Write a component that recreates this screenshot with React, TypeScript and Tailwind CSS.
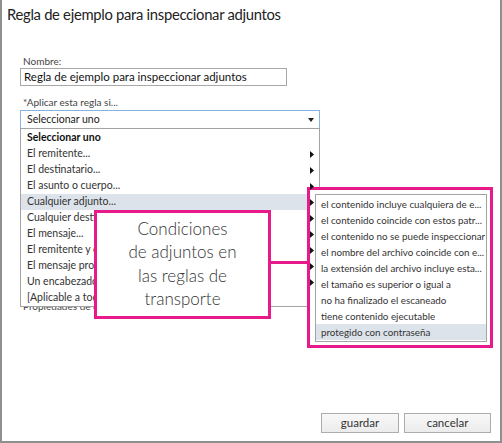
import { ReactNode } from 'react';

const MAGENTA = 'border-[#e8198b]';

const parentItems: { label: string; arrow: boolean; bold?: boolean; active?: boolean }[] = [
  { label: 'Seleccionar uno', arrow: false, bold: true },
  { label: 'El remitente...', arrow: true },
  { label: 'El destinatario...', arrow: true },
  { label: 'El asunto o cuerpo...', arrow: true },
  { label: 'Cualquier adjunto...', arrow: true, active: true },
  { label: 'Cualquier destinatario...', arrow: true },
  { label: 'El mensaje...', arrow: true },
  { label: 'El remitente y el destinatario...', arrow: true },
  { label: 'El mensaje propiedades...', arrow: true },
  { label: 'Un encabezado del mensaje...', arrow: true },
  { label: '[Aplicable a todos los mensajes]', arrow: false },
];

const subItems = [
  'el contenido incluye cualquiera de e...',
  'el contenido coincide con estos patr...',
  'el contenido no se puede inspeccionar',
  'el nombre del archivo coincide con e...',
  'la extensión del archivo incluye esta...',
  'el tamaño es superior o igual a',
  'no ha finalizado el escaneado',
  'tiene contenido ejecutable',
  'protegido con contraseña',
];

function Arrow() {
  return (
    <svg width="4" height="7" viewBox="0 0 4 7" className="relative z-30 shrink-0">
      <path d="M0 0 L4 3.5 L0 7 Z" fill="#111" />
    </svg>
  );
}

function Button({ w, children }: { w: string; children: ReactNode }) {
  return (
    <button
      className={`${w} h-[20px] border border-[#acacac] bg-gradient-to-b from-[#f8f8f8] to-[#ececec] text-[11.5px] leading-[18px] text-[#333]`}
    >
      {children}
    </button>
  );
}

export default function App() {
  return (
    <div
      className="relative w-[502px] h-[443px] bg-white border-x-2 border-b-2 border-[#8f8f8f] flex flex-col overflow-hidden"
      style={{ fontFamily: 'Lato, "Open Sans", sans-serif' }}
    >
      <h1 className="pl-[5px] pt-[3px] h-[25px] text-[14.8px] leading-[22px] tracking-[-0.3px] text-[#222] font-normal">
        Regla de ejemplo para inspeccionar adjuntos
      </h1>

      <div className="pl-[18px] pt-[30px] flex flex-col">
        <label className="text-[10px] leading-[13px] text-[#444] pl-[3px]">Nombre:</label>
        <div className="w-[267px] h-[18px] border border-[#a8a8a8] flex items-center pl-[3px] text-[11.5px] text-[#111]">
          Regla de ejemplo para inspeccionar adjuntos
        </div>

        <label className="mt-[10px] text-[10px] leading-[13px] text-[#444] pl-[3px]">*Aplicar esta regla si...</label>
        <div className="mt-[1px] w-[300px] h-[19px] border border-[#86b3e0] flex items-center justify-between pl-[6px] pr-[5px] text-[10.5px] text-[#222]">
          <span>Seleccionar uno</span>
          <svg width="6" height="4" viewBox="0 0 6 4">
            <path d="M0 0 H6 L3 4 Z" fill="#222" />
          </svg>
        </div>

        <div className="mt-[171px] pl-[3px] text-[10px] leading-[13px] text-[#444]">Propiedades de esta regla</div>
      </div>

      <div className="flex-1" />

      <div className="flex justify-end gap-[5px] pr-[9px] pb-[8px]">
        <Button w="w-[78px]">guardar</Button>
        <Button w="w-[87px]">cancelar</Button>
      </div>

      {/* dropdown list */}
      <div className="absolute left-[18px] top-[128px] w-[300px] h-[179px] bg-white border border-[#a3a3a3] pt-[1px]">
        {parentItems.map((it) => (
          <div
            key={it.label}
            className={`h-[16px] flex items-center justify-between pl-[6px] pr-[5px] text-[10.5px] ${
              it.active ? 'bg-[#dde3ea]' : ''
            } ${it.bold ? 'font-bold text-[#111]' : 'text-[#333]'}`}
          >
            <span className="whitespace-nowrap">{it.label}</span>
            {it.arrow && <Arrow />}
          </div>
        ))}
      </div>

      {/* submenu with highlight frame */}
      <div className={`absolute z-20 left-[305px] top-[187px] w-[186px] h-[161px] border-[3px] ${MAGENTA} bg-white pl-[5px] pt-[4px] pr-[3px] pb-[3px]`}>
        <div className="h-full border border-[#a3a3a3] pt-[1px] overflow-hidden">
          {subItems.map((s, i) => (
            <div
              key={s}
              className={`h-[16px] flex items-center pl-[5px] text-[9.8px] text-[#333] whitespace-nowrap ${
                i === subItems.length - 1 ? 'bg-[#dde3ea]' : ''
              }`}
            >
              {s}
            </div>
          ))}
        </div>
      </div>

      {/* connector */}
      <div className="absolute z-20 left-[268px] top-[261px] w-[40px] h-[3px] bg-[#e8198b]" />

      {/* callout */}
      <div className={`absolute z-20 left-[92px] top-[210px] w-[177px] h-[109px] border-[3px] ${MAGENTA} bg-white flex flex-col items-center justify-center pb-[2px] text-[17px] leading-[23.5px] text-[#333] font-light`}>
        <span>Condiciones</span>
        <span>de adjuntos en</span>
        <span>las reglas de</span>
        <span>transporte</span>
      </div>
    </div>
  );
}
